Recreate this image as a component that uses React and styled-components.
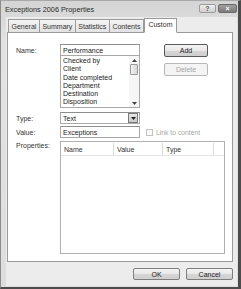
import React from 'react';
import styled, { createGlobalStyle } from 'styled-components';

const GlobalStyle = createGlobalStyle`
    html, body { margin: 0; padding: 0; background: #ffffff; }
    body { font-family: "Liberation Sans", Arial, sans-serif; }
    * { box-sizing: border-box; }
`;

const Window = styled.div`
    width: 241px;
    height: 289px;
    display: flex;
    flex-direction: column;
    background: linear-gradient(#d4d4d4, #e2e2e2 40px, #dedede);
    border-top: 1px solid #a8a8a8;
    border-left: 1px solid #8c8c8c;
    border-right: 3px solid #4c4c4c;
    border-bottom: 2px solid #4c4c4c;
    font-size: 7px;
    color: #1e1e1e;
`;

const TitleBar = styled.div`
    height: 16px;
    display: flex;
    align-items: center;
    padding: 0 1px 1px 4px;
`;

const Title = styled.div`
    flex: 1;
    font-size: 7.3px;
    color: #2a2a2a;
    padding-top: 1px;
`;

const CaptionButton = styled.div`
    width: ${p => p.w}px;
    height: 9px;
    margin-left: 2px;
    border: 1px solid ${p => (p.close ? '#6a6a6a' : '#9a9a9a')};
    border-radius: 2px;
    background: ${p => (p.close ? 'linear-gradient(#a0a0a0, #7a7a7a)' : 'linear-gradient(#eeeeee, #cfcfcf)')};
    color: ${p => (p.close ? '#ffffff' : '#555')};
    font-size: 7px;
    font-weight: bold;
    line-height: 7px;
    text-align: center;
`;

const Client = styled.div`
    flex: 1;
    margin: 0 1px 1px 5px;
    background: #ececec;
    display: flex;
    flex-direction: column;
    padding: 0 3px 0 1px;
`;

const TabStrip = styled.div`
    height: 15px;
    display: flex;
    align-items: flex-end;
    padding-left: 1px;
    position: relative;
    z-index: 1;
`;

const Tab = styled.div`
    height: ${p => (p.active ? 15 : 13)}px;
    padding: 0 ${p => (p.active ? 3.5 : 2.5)}px;
    border: 1px solid #9a9a9a;
    border-bottom: ${p => (p.active ? '1px solid #ffffff' : 'none')};
    border-left: ${p => (p.first || p.active ? '1px solid #9a9a9a' : 'none')};
    margin-bottom: ${p => (p.active ? -1 : 0)}px;
    background: ${p => (p.active ? '#ffffff' : 'linear-gradient(#f4f4f4, #e2e2e2)')};
    display: flex;
    align-items: center;
    font-size: 7px;
    color: #333;
    padding-bottom: ${p => (p.active ? 3 : 0)}px;
`;

const Panel = styled.div`
    height: 230px;
    margin-right: 1px;
    background: #ffffff;
    border: 1px solid #9a9a9a;
    padding: 11px 0 0 8px;
    display: flex;
    flex-direction: column;
`;

const Row = styled.div`
    display: flex;
    align-items: flex-start;
    margin-top: ${p => p.mt || 0}px;
`;

const Label = styled.div`
    width: 44px;
    padding-top: ${p => p.pt ?? 3}px;
    font-size: 7px;
    color: #333;
`;

const Stack = styled.div`
    width: 80px;
    display: flex;
    flex-direction: column;
`;

const Field = styled.div`
    width: 80px;
    height: 12px;
    border: 1px solid #a8a8a8;
    border-top-color: #8e8e8e;
    background: #fff;
    display: flex;
    align-items: center;
    padding-left: 2px;
    font-size: 7px;
    color: #222;
`;

const ListBox = styled.div`
    height: 52px;
    border: 1px solid #a8a8a8;
    border-top: none;
    display: flex;
    background: #fff;
`;

const ListItems = styled.div`
    flex: 1;
    padding: 1px 0 0 2px;
`;

const ListItem = styled.div`
    height: 8.3px;
    line-height: 8.3px;
    font-size: 7px;
    color: #222;
    white-space: nowrap;
`;

const ScrollBar = styled.div`
    width: 10px;
    display: flex;
    flex-direction: column;
    align-items: center;
    background: #f6f6f6;
`;

const Arrow = styled.div`
    height: 8px;
    display: flex;
    align-items: center;
    justify-content: center;
`;

const Thumb = styled.div`
    width: 8px;
    height: 11px;
    border: 1px solid #9a9a9a;
    border-radius: 1px;
    background: linear-gradient(90deg, #f2f2f2, #d8d8d8);
`;

const Track = styled.div`
    flex: 1;
`;

const ButtonColumn = styled.div`
    margin-left: 24px;
    display: flex;
    flex-direction: column;
    gap: 6px;
`;

const Button = styled.div`
    width: ${p => p.w || 44}px;
    height: ${p => p.h || 13}px;
    border: 1px solid ${p => (p.disabled ? '#b8b8b8' : p.strong ? '#5a5a5a' : '#7e7e7e')};
    border-radius: 2px;
    background: ${p => (p.disabled ? '#f4f4f4' : 'linear-gradient(#f4f4f4, #e8e8e8 50%, #d6d6d6 51%, #cfcfcf)')};
    color: ${p => (p.disabled ? '#a6a6a6' : '#222')};
    display: flex;
    align-items: center;
    justify-content: center;
    font-size: 7px;
`;

const SelectBox = styled(Field)`
    padding-right: 1px;
    justify-content: space-between;
`;

const DropButton = styled.div`
    width: 10px;
    height: 10px;
    border: 1px solid #7a7a7a;
    background: linear-gradient(#e8e8e8, #c8c8c8);
    display: flex;
    align-items: center;
    justify-content: center;
`;

const CheckWrap = styled.div`
    display: flex;
    align-items: center;
    margin-left: 6px;
    height: 12px;
    gap: 3px;
    color: #a8a8a8;
    font-size: 6.8px;
`;

const CheckBox = styled.div`
    width: 7px;
    height: 7px;
    border: 1px solid #c2c2c2;
    background: #f8f8f8;
`;

const ListView = styled.div`
    width: 165px;
    height: 113px;
    border: 1px solid #b0b0b0;
    background: #fff;
    padding-top: 1px;
`;

const HeaderRow = styled.div`
    display: flex;
    height: 13px;
    border-bottom: 1px solid #e4e4e4;
`;

const HeaderCell = styled.div`
    width: ${p => p.w}px;
    padding-left: 3px;
    display: flex;
    align-items: center;
    font-size: 7px;
    color: #333;
    border-right: ${p => (p.last ? 'none' : '1px solid #dadada')};
`;

const Footer = styled.div`
    display: flex;
    justify-content: flex-end;
    gap: 6px;
    padding: 6px 1px 0 0;
`;

const listItems = ['Checked by', 'Client', 'Date completed', 'Department', 'Destination', 'Disposition'];
const tabs = ['General', 'Summary', 'Statistics', 'Contents', 'Custom'];

const DownTri = ({ c = '#444' }) => (
    <svg width="5" height="3" viewBox="0 0 5 3"><path d="M0 0h5L2.5 3z" fill={c} /></svg>
);
const UpTri = () => (
    <svg width="5" height="3" viewBox="0 0 5 3"><path d="M0 3h5L2.5 0z" fill="#444" /></svg>
);

export default function App() {
    return (
        <>
            <GlobalStyle />
            <Window>
                <TitleBar>
                    <Title>Exceptions 2006 Properties</Title>
                    <CaptionButton w={17}>?</CaptionButton>
                    <CaptionButton w={19} close>×</CaptionButton>
                </TitleBar>
                <Client>
                    <TabStrip>
                        {tabs.map((t, i) => (
                            <Tab key={t} first={i === 0} active={t === 'Custom'}>{t}</Tab>
                        ))}
                    </TabStrip>
                    <Panel>
                        <Row>
                            <Label>Name:</Label>
                            <Stack>
                                <Field>Performance</Field>
                                <ListBox>
                                    <ListItems>
                                        {listItems.map(it => <ListItem key={it}>{it}</ListItem>)}
                                    </ListItems>
                                    <ScrollBar>
                                        <Arrow><UpTri /></Arrow>
                                        <Thumb />
                                        <Track />
                                        <Arrow><DownTri /></Arrow>
                                    </ScrollBar>
                                </ListBox>
                            </Stack>
                            <ButtonColumn>
                                <Button strong>Add</Button>
                                <Button disabled>Delete</Button>
                            </ButtonColumn>
                        </Row>
                        <Row mt={4}>
                            <Label>Type:</Label>
                            <SelectBox>
                                Text
                                <DropButton><DownTri c="#222" /></DropButton>
                            </SelectBox>
                        </Row>
                        <Row mt={2}>
                            <Label>Value:</Label>
                            <Field>Exceptions</Field>
                            <CheckWrap>
                                <CheckBox />
                                Link to content
                            </CheckWrap>
                        </Row>
                        <Row mt={3}>
                            <Label pt={1}>Properties:</Label>
                            <ListView>
                                <HeaderRow>
                                    <HeaderCell w={53}>Name</HeaderCell>
                                    <HeaderCell w={49}>Value</HeaderCell>
                                    <HeaderCell w={51}>Type</HeaderCell>
                                    <HeaderCell w={10} last />
                                </HeaderRow>
                            </ListView>
                        </Row>
                    </Panel>
                    <Footer>
                        <Button w={47} h={12}>OK</Button>
                        <Button w={47} h={12}>Cancel</Button>
                    </Footer>
                </Client>
            </Window>
        </>
    );
}
